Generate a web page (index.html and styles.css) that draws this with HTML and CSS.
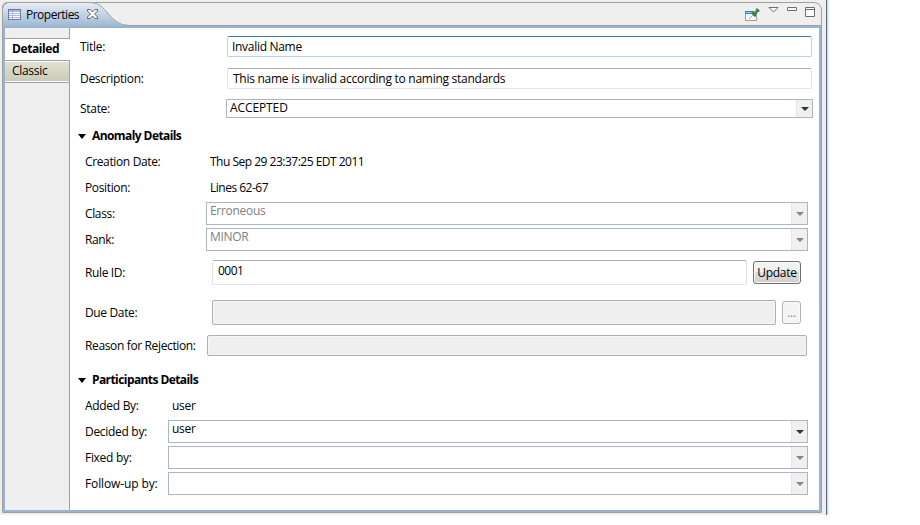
FILE: index.html
```html
<!DOCTYPE html>
<html lang="en">
<head>
<meta charset="utf-8">
<title>Properties</title>
<link rel="stylesheet" href="styles.css">
</head>
<body>
<div class="window">
  <section class="view">
    <header class="bar">
      <svg class="tab-shape" width="130" height="26" viewBox="0 0 130 26">
        <defs><linearGradient id="tabfill" x1="0" y1="0" x2="0" y2="1"><stop offset="0" stop-color="#e9eef4"/><stop offset="1" stop-color="#99b4d1"/></linearGradient></defs>
        <path d="M.5 26V6L2.5 2.5 6 .5H89C105 .5 107 23.500 127 23.500H130V26Z" fill="url(#tabfill)"/>
        <path d="M.5 26V6L2.500 2.500 6 .5H89C105 .5 107 23.500 127 23.500H130" fill="none" stroke="#a0a0a0"/>
      </svg>
      <div class="tab">
        <svg width="13" height="11" viewBox="0 0 13 11" shape-rendering="crispEdges"><path fill="#6878a8" d="M0 0h13v11H0z"/><path fill="#a4b5dc" d="M1 1h11v1H1z"/><path fill="#a9b9d5" d="M1 2h11v8H1z"/><path fill="#fff" d="M1 3h3v1H1zM5 3h7v1H5zM1 5h3v1H1zM5 5h7v1H5zM1 7h3v1H1zM5 7h7v1H5zM1 9h3v1H1zM5 9h7v1H5z"/></svg>
        <span class="tab-title">Properties</span>
        <svg class="close" width="11" height="10" viewBox="0 0 11 10"><path d="M.5 .5H3L5.500 3 8 .5h2.500V2L7.500 5l3 3v1.500H8L5.500 7 3 9.500H.5V8l3-3-3-3z" fill="#fff" stroke="#5f6368"/></svg>
      </div>
      <div class="tools">
        <svg class="pin" width="15" height="14" viewBox="0 0 15 14"><path d="M.5 3.500h11v9H.5z" fill="#edf8ff" stroke="#a59c7b"/><path d="M0 3h9v3H0z" fill="#3f82c4"/><path d="M1 4h7v1H1z" fill="#9bcaf0"/><path d="M4 11l4-4" stroke="#9ba8b0"/><path d="M6 5l2-1 2 0 1-3 1-1 3 3-2 1-2 2v2l-1 1z" fill="#2f7d3a"/><path d="M9 5l3-3" stroke="#77b967"/></svg>
        <svg class="menu" width="11" height="6" viewBox="0 0 11 6"><path d="M1 .5h9L5.500 5z" fill="#fff" stroke="#6e6e6e"/></svg>
        <svg class="min" width="10" height="4" viewBox="0 0 10 4"><path d="M.5 .5h9v3h-9z" fill="#fff" stroke="#6e6e6e"/></svg>
        <svg class="max" width="10" height="10" viewBox="0 0 10 10"><path d="M.5 .5h9v9h-9zM0 2.500h10" fill="#fff" stroke="#6e6e6e"/></svg>
      </div>
    </header>
    <div class="body">
      <nav class="side">
        <div class="side-tab active">Detailed</div>
        <div class="side-tab classic">Classic</div>
      </nav>
      <main class="form">
        <div class="row r-title"><label>Title:</label><div class="field focus"><span>Invalid Name</span></div></div>
        <div class="row r-desc"><label>Description:</label><div class="field"><span class="desc">This name is invalid according to naming standards</span></div></div>
        <div class="row r-state"><label>State:</label><div class="combo"><span class="state">ACCEPTED</span><i class="drop"></i></div></div>
        <h2><i></i>Anomaly Details</h2>
        <div class="group anomaly">
          <div class="row text"><label>Creation Date:</label><span class="date">Thu Sep 29 23:37:25 EDT 2011</span></div>
          <div class="row text"><label>Position:</label><span class="date">Lines 62-67</span></div>
          <div class="row"><label>Class:</label><div class="combo off"><span>Erroneous</span><i class="drop"></i></div></div>
          <div class="row"><label>Rank:</label><div class="combo off"><span>MINOR</span><i class="drop"></i></div></div>
          <div class="row rule"><label>Rule ID:</label><div class="field"><span class="date">0001</span></div><button class="update">Update</button></div>
          <div class="row due"><label>Due Date:</label><div class="field readonly"></div><button class="more" disabled>...</button></div>
          <div class="row reason"><label>Reason for Rejection:</label><div class="field readonly"></div></div>
        </div>
        <h2 class="second"><i></i>Participants Details</h2>
        <div class="group people">
          <div class="row text"><label>Added By:</label><span>user</span></div>
          <div class="row"><label>Decided by:</label><div class="combo"><span>user</span><i class="drop"></i></div></div>
          <div class="row"><label>Fixed by:</label><div class="combo off"><i class="drop"></i></div></div>
          <div class="row"><label class="follow">Follow-up by:</label><div class="combo off"><i class="drop"></i></div></div>
        </div>
      </main>
    </div>
  </section>
</div>
</body>
</html>
```
FILE: styles.css
```css
* { box-sizing: border-box; }
body { margin: 0; background: #fff; color: #000; font: 12px/16px "Open Sans", sans-serif; letter-spacing: -0.3px; overflow: hidden; white-space: nowrap; }
.window { width: 829px; height: 515px; padding: 2px 7px 2px 2px; background: linear-gradient(90deg, #efefef 826px, #5c6b7c 826px 827px, #c5dcfb 827px 828px, #e4effb 828px); }
.view { width: 820px; height: 511px; border: 1px solid #a0a0a0; border-radius: 5px 8px 0 0; display: flex; flex-direction: column; }
.bar { position: relative; height: 23px; border-bottom: 1px solid #a0a0a0; display: flex; justify-content: space-between; flex: none; }
.tab-shape { position: absolute; left: -1px; top: -1px; }
.tab { position: relative; display: flex; height: 23px; align-items: center; padding-left: 5px; }
.tab-title { margin-left: 5px; letter-spacing: -0.5px; }
.close { margin: 0 0 1px 8px; }
.tools { display: flex; align-items: flex-start; padding-right: 6px; }
.pin { margin: 5px 8px 0 0; }
.menu { margin: 4px 8px 0 0; }
.min { margin: 4px 8px 0 0; }
.max { margin: 4px 0 0; }
.body { position: relative; flex: 1; display: flex; border: 2px solid #99b4d1; background: #fff; }
.side { width: 65px; flex: none; padding-top: 10px; background: linear-gradient(90deg, #efefef 64px, #a0a0a0 64px); }
.side-tab { height: 23px; padding: 3px 7px; border-top: 1px solid #a0a0a0; border-bottom: 1px solid #a0a0a0; }
.side-tab.active { background: #fff; font-weight: 700; padding-top: 2px; letter-spacing: -0.4px; }
.side-tab.classic { height: 22px; width: 64px; border-top: 1px solid #fff; box-shadow: inset 0 -1px #fff; background: linear-gradient(#e0e1d0, #c8c9b9); padding-top: 1px; }
.form { flex: 1; padding: 8px 7px 0 10px; }
.row { display: flex; align-items: center; height: 23px; }
.row label { flex: none; }
.field { flex: 1; height: 100%; display: flex; align-items: center; padding-left: 5px; border: 1px solid #e2e3ea; border-top-color: #abadb3; border-radius: 2px; }
.field.focus { border-color: #b5d5ea; border-top-color: #3d7bad; padding-left: 4px; }
.field.readonly { background: #efefef; border-color: #afafaf; box-shadow: inset 0 0 0 1px #f7f7f7; }
.desc { letter-spacing: -0.27px; }
.state { letter-spacing: -0.1px; }
.date { letter-spacing: -0.5px; }
.combo { flex: 1; height: 100%; display: flex; justify-content: space-between; border: 1px solid #abb6c5; padding-left: 3px; }
.drop { width: 16px; margin-left: auto; background: #f0f0f0; border-left: 1px solid #e2e4e7; display: flex; align-items: center; justify-content: center; }
.drop::before { content: ""; border: 4px solid transparent; border-top-color: #333; border-bottom: 0; }
.off { color: #808080; }
.off .drop::before { border-top-color: #858585; }
.r-title { height: 21px; }
.r-title label { width: 147px; }
.r-desc { height: 21px; margin-top: 11px; }
.r-desc label { width: 147px; }
.r-state { height: 19px; margin: 10px -1px 0 0; }
.r-state label { width: 146px; }
h2 { margin: 8px 0 4px -2px; height: 20px; display: flex; align-items: center; font-size: 12px; font-weight: 700; letter-spacing: -0.58px; }
h2 i { border: 4px solid transparent; border-top: 5px solid #000; border-bottom: 0; margin-right: 6px; }
.group { padding-left: 5px; display: flex; flex-direction: column; gap: 3px; margin-right: 4px; }
.row.text { height: 23px; }
.anomaly label { width: 121px; letter-spacing: -0.36px; }
.anomaly .text label, .people .text label { margin-right: 4px; }
.anomaly .rule, .anomaly .due { height: 25px; margin-right: 7px; gap: 6px; }
.anomaly .rule { margin-top: 6px; }
.anomaly .due { margin-top: 12px; }
.rule .field { padding-bottom: 4px; }
.anomaly .reason { height: 21px; margin: 7px 1px 0 0; }
.anomaly .reason label { width: 122px; }
button { height: 23px; padding: 0; border: 1px solid #707070; border-radius: 3px; font: inherit; letter-spacing: inherit; color: #000; background: linear-gradient(#f2f2f2 50%, #ddd 50%, #cfcfcf); box-shadow: inset 0 0 0 1px #fafafa; }
.update { width: 48px; }
.more { width: 19px; color: #838383; background: #f4f4f4; border-color: #adb2b5; }
h2.second { margin-top: 14px; }
.people label { width: 83px; }
.follow { letter-spacing: -0.12px; }
```
